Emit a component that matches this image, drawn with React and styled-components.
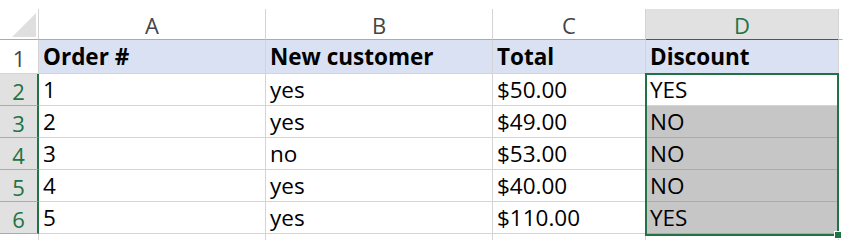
import React from 'react'
import styled, { createGlobalStyle } from 'styled-components'

const GlobalStyle = createGlobalStyle`
  html, body {
    margin: 0;
    padding: 0;
    background: #fff;
  }
  body {
    font-family: "Open Sans", "Liberation Sans", sans-serif;
  }
`

const GRID = '#d4d4d4'
const GREEN = '#217346'

const columns = ['A', 'B', 'C', 'D']
const header = ['Order #', 'New customer', 'Total', 'Discount']
const rows = [
  ['1', 'yes', '$50.00', 'YES'],
  ['2', 'yes', '$49.00', 'NO'],
  ['3', 'no', '$53.00', 'NO'],
  ['4', 'yes', '$40.00', 'NO'],
  ['5', 'yes', '$110.00', 'YES'],
]

const App = () => {
  return (
    <>
      <GlobalStyle />
      <Page>
        <Sheet>
          <Corner>
            <Triangle />
          </Corner>
          {columns.map((c) => (
            <ColHead key={c} $active={c === 'D'}>{c}</ColHead>
          ))}
          <ColHead $blank />

          <RowHead>1</RowHead>
          {header.map((h) => (
            <HeadCell key={h}>{h}</HeadCell>
          ))}
          <Filler />

          {rows.map((r, i) => (
            <React.Fragment key={i}>
              <RowHead $active>{i + 2}</RowHead>
              {r.map((v, j) => (
                <Cell key={j} $selected={j === 3 && i > 0}>
                  {v}
                </Cell>
              ))}
              <Filler />
            </React.Fragment>
          ))}

          <RowHead $last />
          <Cell $last />
          <Cell $last />
          <Cell $last />
          <Cell $last />
          <Filler />

          <Selection>
            <Handle />
          </Selection>
        </Sheet>
      </Page>
    </>
  )
}

const Page = styled.div`
  width: 843px;
  height: 240px;
  overflow: hidden;
  padding-top: 9px;
  box-sizing: border-box;
  background: #fff;
`

const Sheet = styled.div`
  position: relative;
  display: grid;
  grid-template-columns: 39px 227px 227px 153px 193px 1fr;
  grid-template-rows: 31px 34px repeat(5, 32px) 20px;
`

const Corner = styled.div`
  position: relative;
  box-sizing: border-box;
  border-right: 1px solid ${GRID};
  border-bottom: 1px solid #ababab;
  background: #fff;
`

const Triangle = styled.div`
  position: absolute;
  right: 2px;
  bottom: 2px;
  width: 0;
  height: 0;
  border-left: 24px solid transparent;
  border-bottom: 24px solid #dfdfdf;
`

const ColHead = styled.div`
  box-sizing: border-box;
  display: flex;
  align-items: center;
  justify-content: center;
  padding-top: 2px;
  font-size: 22px;
  color: ${({ $active }) => ($active ? GREEN : '#444')};
  background: ${({ $active }) => ($active ? '#e1e1e1' : '#fff')};
  border-right: 1px solid ${({ $blank }) => ($blank ? 'transparent' : GRID)};
  border-bottom: ${({ $active }) => ($active ? `2px solid ${GREEN}` : '1px solid #ababab')};
  ${({ $active }) => $active && 'margin-bottom: -1px;'}
  ${({ $blank }) => $blank && 'border-bottom: 1px solid #ababab; max-width: 5px;'}
`

const RowHead = styled.div`
  box-sizing: border-box;
  display: flex;
  align-items: center;
  justify-content: center;
  padding-top: 2px;
  font-size: 22px;
  color: ${({ $active }) => ($active ? GREEN : '#444')};
  background: ${({ $active }) => ($active ? '#e1e1e1' : '#fff')};
  border-bottom: 1px solid ${({ $active }) => ($active ? '#ababab' : GRID)};
  border-right: ${({ $active }) => ($active ? `2px solid ${GREEN}` : `1px solid ${GRID}`)};
  ${({ $last }) => $last && `border-bottom: none;`}
`

const HeadCell = styled.div`
  box-sizing: border-box;
  display: flex;
  align-items: flex-end;
  padding: 0 0 1px 4px;
  font-size: 22.5px;
  font-weight: 700;
  color: #000;
  background: #d9e1f2;
  border-right: 1px solid ${GRID};
  border-bottom: 1px solid ${GRID};
`

const Cell = styled.div`
  box-sizing: border-box;
  display: flex;
  align-items: flex-end;
  padding: 0 0 0 4px;
  font-size: 22.5px;
  color: #000;
  white-space: nowrap;
  background: ${({ $selected }) => ($selected ? '#c6c6c6' : '#fff')};
  border-right: 1px solid ${GRID};
  border-bottom: 1px solid ${({ $selected }) => ($selected ? '#ababab' : GRID)};
  ${({ $last }) => $last && 'border-bottom: none;'}
`

const Filler = styled.div`
  background: #fff;
`

const Selection = styled.div`
  position: absolute;
  left: 645px;
  top: 64px;
  width: 194px;
  height: 163px;
  box-sizing: border-box;
  border: 2px solid ${GREEN};
  pointer-events: none;
`

const Handle = styled.div`
  position: absolute;
  right: -5px;
  bottom: -5px;
  width: 6px;
  height: 6px;
  background: ${GREEN};
  border: 1px solid #fff;
`

export default App
